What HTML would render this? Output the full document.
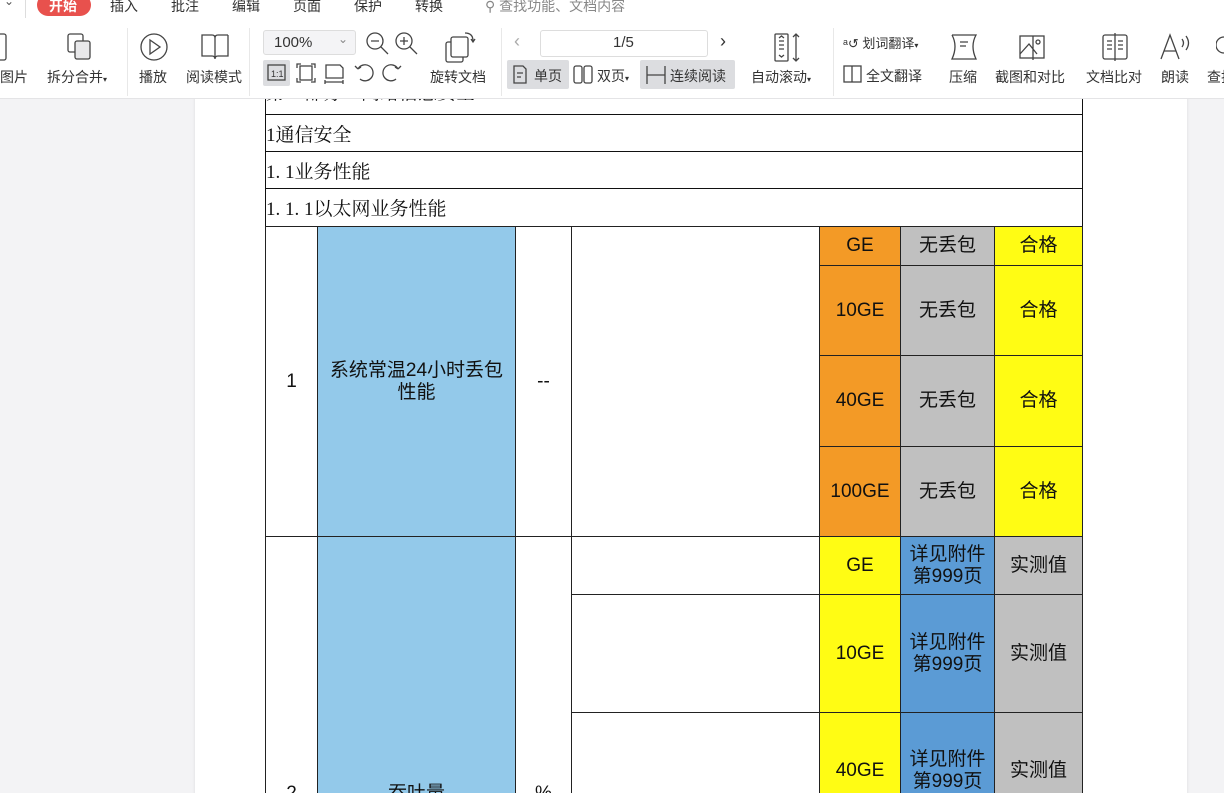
<!DOCTYPE html>
<html><head><meta charset="utf-8"><style>
*{margin:0;padding:0;box-sizing:border-box}
html,body{width:1224px;height:793px;overflow:hidden}
body{background:#f3f3f5;font-family:"Liberation Sans","Noto Sans CJK SC",sans-serif;color:#333}
#w{position:relative;width:1224px;height:793px;overflow:hidden}
.a{position:absolute}
.tb{left:0;top:0;width:1224px;height:99px;background:#fff;border-bottom:1px solid #e4e4e6}
.t{position:absolute;font-size:14px;color:#333;white-space:nowrap}
.tab{top:-4px;font-size:14px;color:#333}
.page{left:195px;top:90px;width:992px;height:710px;background:#fff;box-shadow:0 0 3px #ddd}
.c{position:absolute;display:flex;align-items:center;justify-content:center;text-align:center;font-size:19px;color:#111;border:1px solid #222;line-height:22px}
.h{position:absolute;left:265px;width:818px;border:1px solid #111;font-family:"Liberation Serif","Noto Serif CJK SC",serif;font-size:19px;color:#111;display:flex;align-items:center}
svg{position:absolute;fill:none;stroke:#444;stroke-width:1.3}
</style></head><body><div id="w">
<div class="a page"></div>
<div class="h" style="top:80px;height:35px;align-items:flex-end;overflow:hidden"><span style="position:relative;top:-9px">第一部分：网络信息安全</span></div>
<div class="h" style="top:114px;height:38px">1通信安全</div>
<div class="h" style="top:151px;height:38px">1. 1业务性能</div>
<div class="h" style="top:188px;height:39px">1. 1. 1以太网业务性能</div>
<div class="c" style="left:265px;top:226px;width:53px;height:311px">1</div>
<div class="c" style="left:317px;top:226px;width:199px;height:311px;background:#93c9ea">系统常温24小时丢包<br>性能</div>
<div class="c" style="left:515px;top:226px;width:57px;height:311px">--</div>
<div class="c" style="left:571px;top:226px;width:249px;height:311px"></div>
<div class="c" style="left:819px;top:226px;width:82px;height:40px;background:#f39a26">GE</div>
<div class="c" style="left:900px;top:226px;width:95px;height:40px;background:#c0c0c0">无丢包</div>
<div class="c" style="left:994px;top:226px;width:89px;height:40px;background:#fffc14">合格</div>
<div class="c" style="left:819px;top:265px;width:82px;height:91px;background:#f39a26">10GE</div>
<div class="c" style="left:900px;top:265px;width:95px;height:91px;background:#c0c0c0">无丢包</div>
<div class="c" style="left:994px;top:265px;width:89px;height:91px;background:#fffc14">合格</div>
<div class="c" style="left:819px;top:355px;width:82px;height:92px;background:#f39a26">40GE</div>
<div class="c" style="left:900px;top:355px;width:95px;height:92px;background:#c0c0c0">无丢包</div>
<div class="c" style="left:994px;top:355px;width:89px;height:92px;background:#fffc14">合格</div>
<div class="c" style="left:819px;top:446px;width:82px;height:91px;background:#f39a26">100GE</div>
<div class="c" style="left:900px;top:446px;width:95px;height:91px;background:#c0c0c0">无丢包</div>
<div class="c" style="left:994px;top:446px;width:89px;height:91px;background:#fffc14">合格</div>
<div class="c" style="left:265px;top:536px;width:53px;height:300px;align-items:flex-end;padding-bottom:30px">2</div>
<div class="c" style="left:317px;top:536px;width:199px;height:300px;background:#93c9ea;align-items:flex-end;padding-bottom:30px">吞吐量</div>
<div class="c" style="left:515px;top:536px;width:57px;height:300px;align-items:flex-end;padding-bottom:30px">%</div>
<div class="c" style="left:571px;top:536px;width:249px;height:59px"></div>
<div class="c" style="left:571px;top:594px;width:249px;height:119px"></div>
<div class="c" style="left:571px;top:712px;width:249px;height:120px"></div>
<div class="c" style="left:819px;top:536px;width:82px;height:59px;background:#fffc14">GE</div>
<div class="c" style="left:900px;top:536px;width:95px;height:59px;background:#5b9bd5">详见附件<br>第999页</div>
<div class="c" style="left:994px;top:536px;width:89px;height:59px;background:#c0c0c0">实测值</div>
<div class="c" style="left:819px;top:594px;width:82px;height:119px;background:#fffc14">10GE</div>
<div class="c" style="left:900px;top:594px;width:95px;height:119px;background:#5b9bd5">详见附件<br>第999页</div>
<div class="c" style="left:994px;top:594px;width:89px;height:119px;background:#c0c0c0">实测值</div>
<div class="c" style="left:819px;top:712px;width:82px;height:118px;background:#fffc14">40GE</div>
<div class="c" style="left:900px;top:712px;width:95px;height:118px;background:#5b9bd5">详见附件<br>第999页</div>
<div class="c" style="left:994px;top:712px;width:89px;height:118px;background:#c0c0c0">实测值</div>

<div class="a tb"></div>
<div class="t" style="left:4px;top:-6px;font-size:12px;color:#555">⌄</div>
<div class="a" style="left:25px;top:0;width:1px;height:18px;background:#ddd"></div>
<div class="a" style="left:37px;top:-6px;width:54px;height:22px;border-radius:11px;background:#e8514d"></div>
<div class="t tab" style="left:49px;color:#fff;font-weight:bold">开始</div>
<div class="t tab" style="left:110px">插入</div>
<div class="t tab" style="left:171px">批注</div>
<div class="t tab" style="left:232px">编辑</div>
<div class="t tab" style="left:293px">页面</div>
<div class="t tab" style="left:354px">保护</div>
<div class="t tab" style="left:415px">转换</div>
<div class="t tab" style="left:485px;color:#888">⚲ 查找功能、文档内容</div>

<svg style="left:-6px;top:33px" width="14" height="30"><rect x="0" y="1" width="12" height="26" rx="2"/></svg>
<div class="t" style="left:0;top:67px">图片</div>
<svg style="left:66px;top:32px" width="32" height="32"><rect x="2" y="2" width="15" height="18" rx="2"/><rect x="9" y="9" width="15" height="18" rx="2" fill="#e8e8ea"/></svg>
<div class="t" style="left:47px;top:67px">拆分合并<span style="font-size:8px">▾</span></div>
<div class="a" style="left:127px;top:28px;width:1px;height:68px;background:#e8e8e8"></div>
<svg style="left:139px;top:32px" width="30" height="30"><circle cx="15" cy="15" r="13"/><path d="M11 8 L21 15 L11 22 Z"/></svg>
<div class="t" style="left:139px;top:67px">播放</div>
<svg style="left:199px;top:32px" width="32" height="30"><path d="M3 3 H13 Q16 3 16 6 V27 Q16 24 13 24 H3 Z M29 3 H19 Q16 3 16 6 M29 3 V24 H19 Q16 24 16 27"/></svg>
<div class="t" style="left:186px;top:67px">阅读模式</div>
<div class="a" style="left:249px;top:28px;width:1px;height:68px;background:#e8e8e8"></div>
<div class="a" style="left:263px;top:30px;width:93px;height:25px;border:1px solid #ddd;border-radius:3px;background:#f4f4f6"></div>
<div class="t" style="left:274px;top:34px;font-size:15px">100%</div>
<div class="t" style="left:338px;top:32px;font-size:12px;color:#888">⌄</div>
<svg style="left:365px;top:31px" width="26" height="26"><circle cx="10" cy="10" r="8"/><path d="M6 10 H14 M16 16 L23 23"/></svg>
<svg style="left:394px;top:31px" width="26" height="26"><circle cx="10" cy="10" r="8"/><path d="M6 10 H14 M10 6 V14 M16 16 L23 23"/></svg>
<div class="a" style="left:263px;top:60px;width:27px;height:26px;background:#dcdde0;border-radius:2px"></div>
<svg style="left:266px;top:63px" width="22" height="20"><rect x="2" y="2" width="17" height="15"/><text x="5" y="14" font-size="9" fill="#333" stroke="none">1:1</text></svg>
<svg style="left:295px;top:62px" width="22" height="22"><path d="M2 6 V2 H6 M16 2 H20 V6 M20 16 V20 H16 M6 20 H2 V16"/><rect x="5" y="4" width="12" height="14"/></svg>
<svg style="left:322px;top:62px" width="24" height="22"><path d="M4 3 H18 L21 6 V16 H4 Z M3 20 H21 M3 18 V22 M21 18 V22"/></svg>
<svg style="left:352px;top:61px" width="24" height="22"><path d="M6 8 A8 8 0 1 1 8 18 M6 8 L3 5 M6 8 L9 6"/></svg>
<svg style="left:380px;top:61px" width="24" height="22"><path d="M18 8 A8 8 0 1 0 16 18 M18 8 L21 5 M18 8 L15 6"/></svg>
<svg style="left:443px;top:30px" width="34" height="34"><rect x="3" y="12" width="17" height="20" rx="2"/><rect x="8" y="7" width="17" height="20" rx="2" fill="#fff"/><path d="M22 3 Q30 3 30 11 M28 9 L30 12 L32 9"/></svg>
<div class="t" style="left:430px;top:67px">旋转文档</div>
<div class="a" style="left:501px;top:28px;width:1px;height:68px;background:#e8e8e8"></div>
<div class="t" style="left:514px;top:31px;font-size:18px;color:#aaa">‹</div>
<div class="a" style="left:540px;top:30px;width:168px;height:27px;border:1px solid #ddd;border-radius:3px"></div>
<div class="t" style="left:613px;top:34px;font-size:15px">1/5</div>
<div class="t" style="left:720px;top:31px;font-size:18px">›</div>
<div class="a" style="left:507px;top:60px;width:62px;height:29px;background:#dcdde0;border-radius:2px"></div>
<svg style="left:510px;top:64px" width="20" height="22"><path d="M4 2 H13 L16 5 V19 H4 Z M7 9 H13 M7 13 H11"/></svg>
<div class="t" style="left:534px;top:66px">单页</div>
<svg style="left:572px;top:64px" width="24" height="22"><rect x="2" y="2" width="8" height="17" rx="2"/><rect x="12" y="2" width="8" height="17" rx="2"/></svg>
<div class="t" style="left:597px;top:66px">双页<span style="font-size:8px">▾</span></div>
<div class="a" style="left:640px;top:60px;width:95px;height:29px;background:#dcdde0;border-radius:2px"></div>
<svg style="left:644px;top:64px" width="24" height="22"><path d="M3 2 V20 M21 2 V20 M3 11 H21"/></svg>
<div class="t" style="left:670px;top:66px">连续阅读</div>
<svg style="left:772px;top:31px" width="30" height="32"><rect x="3" y="3" width="13" height="27" rx="1"/><path d="M7 10 H12 M7 14 H12 M7 18 H12 M7 7 L9.5 5 L12 7 M7 24 L9.5 26 L12 24 M24 3 V30 M21 6 L24 3 L27 6 M21 27 L24 30 L27 27"/></svg>
<div class="t" style="left:751px;top:67px">自动滚动<span style="font-size:8px">▾</span></div>
<div class="a" style="left:833px;top:28px;width:1px;height:68px;background:#e8e8e8"></div>
<div class="t" style="left:843px;top:33px;font-size:13px">ᵃ↺ 划词翻译<span style="font-size:8px">▾</span></div>
<svg style="left:842px;top:63px" width="22" height="22"><rect x="2" y="3" width="17" height="16"/><path d="M10 3 V19"/></svg>
<div class="t" style="left:866px;top:66px">全文翻译</div>
<svg style="left:948px;top:32px" width="32" height="30"><path d="M4 3 H28 Q22 14 28 27 H4 Q10 14 4 3 M12 10 H20 M12 14 H18"/></svg>
<div class="t" style="left:949px;top:67px">压缩</div>
<svg style="left:1015px;top:32px" width="34" height="30"><rect x="5" y="4" width="24" height="22"/><path d="M5 22 L14 12 L22 22 M18 4 V28"/><circle cx="23" cy="10" r="2"/></svg>
<div class="t" style="left:995px;top:67px">截图和对比</div>
<svg style="left:1100px;top:32px" width="30" height="30"><rect x="3" y="3" width="24" height="24" rx="2"/><path d="M15 1 V29 M7 9 H12 M7 13 H12 M7 17 H12 M18 9 H23 M18 13 H23 M18 17 H23"/></svg>
<div class="t" style="left:1086px;top:67px">文档比对</div>
<svg style="left:1158px;top:31px" width="36" height="32"><path d="M3 28 L12 4 L21 28 M6 20 H18 M24 8 Q27 12 24 16 M28 5 Q33 12 28 19"/></svg>
<div class="t" style="left:1161px;top:67px">朗读</div>
<div class="t" style="left:1207px;top:67px">查找</div>
<svg style="left:1216px;top:33px" width="10" height="24"><path d="M8 4 A8 8 0 0 0 8 20"/></svg>
</div></body></html>
